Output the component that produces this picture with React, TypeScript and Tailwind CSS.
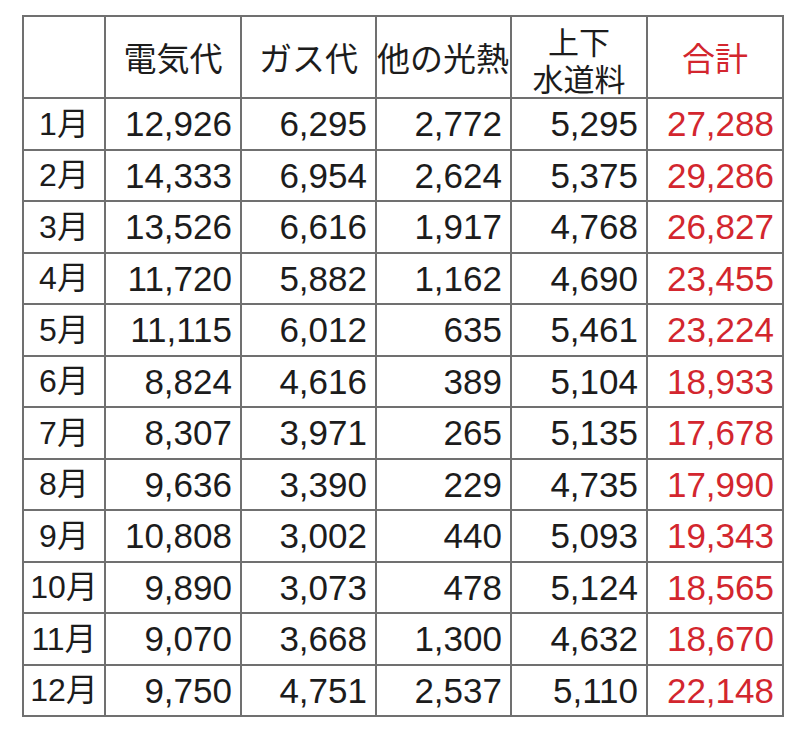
import React from "react";

type Row = { month: string; values: number[]; total: number };

const rows: Row[] = [
  { month: "1月", values: [12926, 6295, 2772, 5295], total: 27288 },
  { month: "2月", values: [14333, 6954, 2624, 5375], total: 29286 },
  { month: "3月", values: [13526, 6616, 1917, 4768], total: 26827 },
  { month: "4月", values: [11720, 5882, 1162, 4690], total: 23455 },
  { month: "5月", values: [11115, 6012, 635, 5461], total: 23224 },
  { month: "6月", values: [8824, 4616, 389, 5104], total: 18933 },
  { month: "7月", values: [8307, 3971, 265, 5135], total: 17678 },
  { month: "8月", values: [9636, 3390, 229, 4735], total: 17990 },
  { month: "9月", values: [10808, 3002, 440, 5093], total: 19343 },
  { month: "10月", values: [9890, 3073, 478, 5124], total: 18565 },
  { month: "11月", values: [9070, 3668, 1300, 4632], total: 18670 },
  { month: "12月", values: [9750, 4751, 2537, 5110], total: 22148 },
];

const fmt = (n: number) => n.toLocaleString("en-US");

const cell = "border-2 border-[#707070] p-0";
const num = `${cell} text-right pr-[8px] text-[35px] leading-none`;

const App: React.FC = () => {
  return (
    <div className="w-[800px] h-[736px] bg-white pt-[15px] pl-[22px] font-['Liberation_Sans','Noto_Sans_CJK_JP',sans-serif] text-[#1c1c1c]">
      <table className="table-fixed border-collapse w-[760px]">
        <colgroup>
          <col className="w-[82px]" />
          <col className="w-[136px]" />
          <col className="w-[135px]" />
          <col className="w-[135px]" />
          <col className="w-[136px]" />
          <col className="w-[136px]" />
        </colgroup>
        <thead>
          <tr className="h-[82px] font-['Noto_Sans_CJK_JP',sans-serif] text-[33px] leading-none">
            <th className={cell}></th>
            <th className={`${cell} font-normal text-center`}>電気代</th>
            <th className={`${cell} font-normal text-center`}>ガス代</th>
            <th className={`${cell} font-normal text-left whitespace-nowrap overflow-visible`}>他の光熱</th>
            <th className={`${cell} font-normal text-center text-[31px] leading-[37px] pt-[4px]`}>
              <div>上下</div>
              <div>水道料</div>
            </th>
            <th className={`${cell} font-normal text-center text-[#d3262e]`}>合計</th>
          </tr>
        </thead>
        <tbody>
          {rows.map((r) => (
            <tr key={r.month} className="h-[51.5px]">
              <td className={`${cell} text-center text-[32px] leading-none whitespace-nowrap`}>{r.month}</td>
              {r.values.map((v, i) => (
                <td key={i} className={num}>
                  {fmt(v)}
                </td>
              ))}
              <td className={`${num} text-[#d3262e]`}>{fmt(r.total)}</td>
            </tr>
          ))}
        </tbody>
      </table>
    </div>
  );
};

export default App;
